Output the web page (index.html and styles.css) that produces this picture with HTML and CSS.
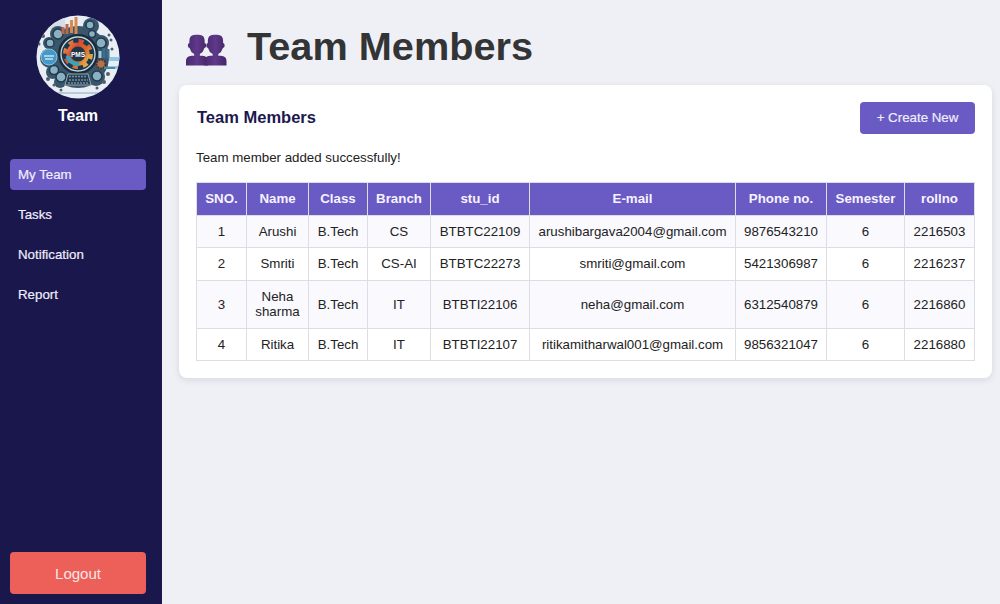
FILE: index.html
```html
<!DOCTYPE html>
<html lang="en">
<head>
<meta charset="utf-8">
<title>Team Members</title>
<link rel="stylesheet" href="styles.css">
</head>
<body>
<div class="app">
  <aside class="sidebar">
    <svg class="logo" viewBox="0 0 84 84" aria-hidden="true">
      <defs>
        <linearGradient id="gear" x1="0" y1="0" x2="1" y2=".7">
          <stop offset="0" stop-color="#e8a050"/><stop offset=".35" stop-color="#d94a31"/>
          <stop offset=".7" stop-color="#d7672f"/><stop offset="1" stop-color="#e5ae45"/>
        </linearGradient>
        <clipPath id="disc"><circle cx="42" cy="42" r="41.5"/></clipPath>
      </defs>
      <g clip-path="url(#disc)">
        <rect width="84" height="84" fill="#e9eef5"/>
        <path d="M0 0h29v14H0z" fill="#d5dde8"/>
        <path d="M67 42h17v4H67zM68 51h14v3H68z" fill="#8ec7e2"/>
        <path d="M12 78h60" stroke="#a9bfcf" stroke-width="1.500"/>
        <g fill="#3a566b">
          <circle cx="42" cy="42" r="31"/>
          <circle cx="22" cy="19" r="8"/><circle cx="13" cy="28" r="6"/><circle cx="55" cy="11" r="8"/>
          <circle cx="65" cy="28" r="8"/><circle cx="64" cy="49" r="8"/><circle cx="14" cy="43" r="10"/>
          <circle cx="17" cy="57" r="7"/><circle cx="24" cy="67" r="6"/><circle cx="60" cy="62" r="9"/>
        </g>
        <g fill="#8bb1c1" stroke="#203a50" stroke-width="1.500">
          <circle cx="22" cy="19" r="5"/><circle cx="14" cy="28" r="4"/><circle cx="54" cy="10" r="4"/>
          <circle cx="56" cy="19" r="3.500"/><circle cx="65" cy="28" r="5"/><circle cx="18" cy="55" r="4.500"/>
          <circle cx="25" cy="62" r="5"/><circle cx="61" cy="61" r="5"/>
        </g>
        <circle cx="65" cy="49" r="4.500" fill="#ad754e" stroke="#4b3430" stroke-width="2" stroke-dasharray="2 1"/>
        <circle cx="13" cy="42" r="8" fill="#4698c9" stroke="#88c2df"/>
        <path d="M8 41h10M9 44h8" stroke="#c4e5f4" stroke-width="1.500"/>
        <g stroke-width="3">
          <path d="M27 19v-7M31 19V9" stroke="#be674c"/><path d="M35.500 18V5M40 19V2" stroke="#d88950"/>
          <path d="M64 43v-7" stroke="#9ecbdc"/><path d="M68 43V33M72 43V34" stroke="#3e6e8c"/>
        </g>
        <circle cx="42" cy="39" r="19" fill="#142c40" stroke="#192a3c" stroke-width="2"/>
        <circle cx="42" cy="39" r="17" fill="#1b394e" stroke="#c3d3d8" stroke-width="1.400"/>
        <circle cx="42" cy="39" r="12.700" fill="none" stroke="url(#gear)" stroke-width="4.500" stroke-dasharray="5 5"/>
        <circle cx="42" cy="39" r="11.500" fill="url(#gear)"/>
        <path d="M43 49A10.500 10.500 0 0 1 31.500 41" fill="none" stroke="#36a5b8" stroke-width="4"/>
        <circle cx="42" cy="39" r="7.500" fill="#203548"/>
        <text class="logo-text" x="42" y="41.500">PMS</text>
        <path d="M32 59h20l3 11H29z" fill="#263e51" stroke="#91a7b3"/>
        <path d="M33 61.500h18M33 65h19M32 68h21" stroke="#718c9b" stroke-width="1.700" stroke-dasharray="2 1"/>
        <path d="M68 53h11" stroke="#4988a8" stroke-width="2"/>
        <g fill="#52606e">
          <circle cx="7" cy="21" r="2"/><circle cx="3" cy="29" r="1.500"/><circle cx="73" cy="20" r="1.500"/>
          <circle cx="75" cy="25" r="1.500"/><circle cx="76" cy="34" r="1.500"/><circle cx="12" cy="64" r="2"/>
          <circle cx="18" cy="70" r="1.500"/><circle cx="72" cy="59" r="2"/><circle cx="68" cy="67" r="2"/>
          <circle cx="61" cy="73" r="1.500"/><circle cx="25" cy="75" r="1.500"/>
        </g>
      </g>
    </svg>
    <div class="role">Team</div>
    <nav class="nav">
      <a class="nav-item active">My Team</a>
      <a class="nav-item">Tasks</a>
      <a class="nav-item">Notification</a>
      <a class="nav-item">Report</a>
    </nav>
    <button class="logout">Logout</button>
  </aside>
  <main class="main">
    <header class="page-head">
      <svg class="people" viewBox="0 0 40 31" aria-hidden="true">
        <defs>
          <linearGradient id="purple" x1="0" y1="0" x2="1" y2="0">
            <stop offset="0" stop-color="#472a6e"/><stop offset=".5" stop-color="#5e3989"/><stop offset="1" stop-color="#432568"/>
          </linearGradient>
          <g id="person">
            <path d="M0 30.500V26q0-4.500 5.500-5H8v-1.500Q4.500 17.500 3.500 13.500 1.800 13 1.800 11T3.300 8.700V6.500Q3.300.5 9 .5h3.500q5.700 0 5.700 6v2.200q1.500.3 1.500 2.300T18 13.500q-1 4-4.500 6V21H16q5.500.5 5.500 5v4.500z"/>
          </g>
        </defs>
        <use href="#person" fill="url(#purple)"/>
        <use href="#person" x="18" fill="url(#purple)"/>
      </svg>
      <h1 class="page-title">Team Members</h1>
    </header>
    <section class="card">
      <div class="card-head">
        <h2 class="card-title">Team Members</h2>
        <button class="create">+ Create New</button>
      </div>
      <p class="message">Team member added successfully!</p>
      <table class="members">
        <colgroup><col class="c-sno"><col class="c-name"><col class="c-class"><col class="c-branch"><col class="c-id"><col class="c-mail"><col class="c-phone"><col class="c-sem"><col class="c-roll"></colgroup>
        <thead>
          <tr><th>SNO.</th><th>Name</th><th>Class</th><th>Branch</th><th>stu_id</th><th>E-mail</th><th>Phone no.</th><th>Semester</th><th>rollno</th></tr>
        </thead>
        <tbody>
          <tr class="short"><td>1</td><td>Arushi</td><td>B.Tech</td><td>CS</td><td>BTBTC22109</td><td>arushibargava2004@gmail.com</td><td>9876543210</td><td>6</td><td>2216503</td></tr>
          <tr><td>2</td><td>Smriti</td><td>B.Tech</td><td>CS-AI</td><td>BTBTC22273</td><td>smriti@gmail.com</td><td>5421306987</td><td>6</td><td>2216237</td></tr>
          <tr class="tall"><td>3</td><td>Neha sharma</td><td>B.Tech</td><td>IT</td><td>BTBTI22106</td><td>neha@gmail.com</td><td>6312540879</td><td>6</td><td>2216860</td></tr>
          <tr class="short"><td>4</td><td>Ritika</td><td>B.Tech</td><td>IT</td><td>BTBTI22107</td><td>ritikamitharwal001@gmail.com</td><td>9856321047</td><td>6</td><td>2216880</td></tr>
        </tbody>
      </table>
    </section>
  </main>
</div>
</body>
</html>
```
FILE: styles.css
```css
* { box-sizing: border-box; }
body {
  margin: 0;
  background: #eff0f5;
  font-family: "Liberation Sans", Arial, sans-serif;
  font-size: 13.3px;
  color: #222;
}
.app { display: flex; height: 604px; }
.sidebar {
  width: 162px;
  flex: none;
  display: flex;
  flex-direction: column;
  padding: 15px 16px 10px 10px;
  background: #1a174d;
  color: #f0eefa;
}
.logo { width: 84px; height: 84px; margin-left: 26px; }
.logo-text { font-size: 6.5px; font-weight: bold; fill: #fff; text-anchor: middle; }
.role { margin-top: 7px; text-align: center; font-size: 15.8px; line-height: 20px; font-weight: bold; color: #fff; }
.nav { margin-top: 33px; display: flex; flex-direction: column; gap: 9px; }
.nav-item { height: 31px; padding: 0 8px; border-radius: 4px; line-height: 31px; -webkit-text-stroke: .2px; }
.active { background: #695ac4; }
.logout {
  margin-top: auto;
  height: 42px;
  border: 0;
  border-radius: 4px;
  background: #ec6059;
  color: #fbe5e6;
  font: 15px "Liberation Sans", Arial, sans-serif;
}
.main { flex: 1; padding: 0 8px 0 17px; }
.page-head { display: flex; height: 85px; padding-left: 7px; }
.people { width: 41px; height: 32px; margin-top: 34px; }
.page-title { margin: 23px 0 0 20px; font-size: 39.7px; line-height: 46px; color: #333436; }
.card {
  height: 293px;
  padding: 17px 17px 0;
  border-radius: 8px;
  background: #fff;
  box-shadow: 0 2px 6px rgba(40, 50, 80, .12);
}
.card-head { display: flex; justify-content: space-between; height: 32px; }
.card-title { margin: 0 0 0 1px; font-size: 16.5px; line-height: 31px; color: #1c184e; }
.create {
  width: 115px;
  height: 32px;
  padding: 0 0 1px;
  border: 0;
  border-radius: 4px;
  background: #695ac4;
  color: #f0edfb;
  font: 13.3px "Liberation Sans", Arial, sans-serif;
  -webkit-text-stroke: .2px;
}
.message { margin: 16px 0; line-height: 16px; }
.members { width: 779px; table-layout: fixed; border-collapse: collapse; text-align: center; line-height: 15px; }
.members th, .members td { padding: 0 8px 1px; border: 1px solid #dedde3; }
.members th { height: 33px; background: #695ac4; color: #f6f3ff; }
.members td { height: 33px; }
.members tr:nth-child(odd) td { background: #f9f9fe; }
.members .tall td { height: 48px; }
.members .short td { height: 32px; }
.c-sno { width: 50px; }
.c-name { width: 62px; }
.c-class { width: 59px; }
.c-branch { width: 63px; }
.c-id { width: 99px; }
.c-mail { width: 206px; }
.c-phone { width: 91px; }
.c-sem { width: 78px; }
.c-roll { width: 70px; }
```
